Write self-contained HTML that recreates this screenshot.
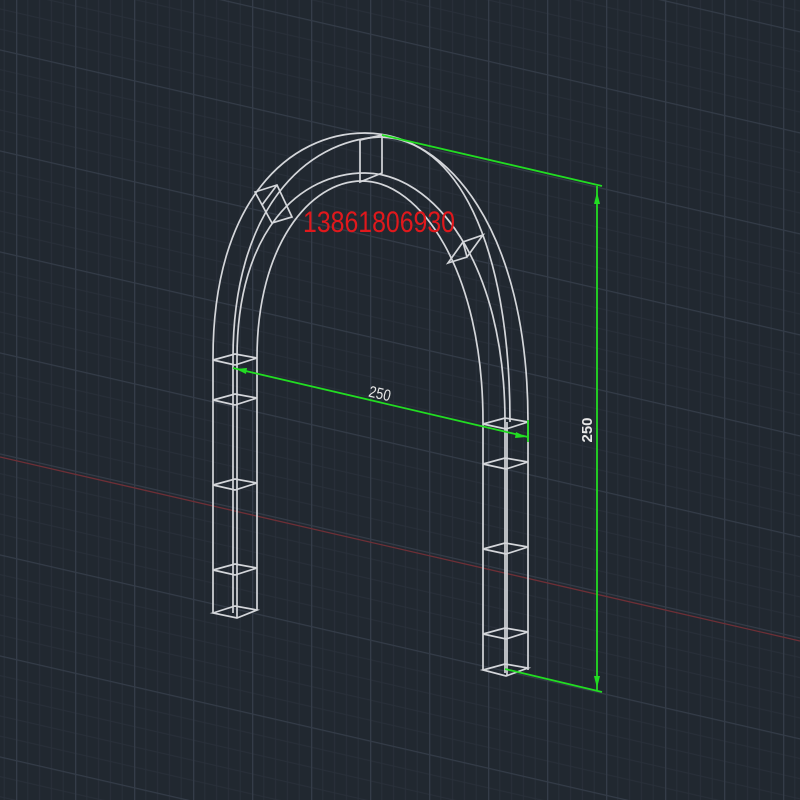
<!DOCTYPE html>
<html><head><meta charset="utf-8"><style>
html,body{margin:0;padding:0;background:#212830;}
svg{display:block}
</style></head><body>
<svg width="800" height="800" viewBox="0 0 800 800" xmlns="http://www.w3.org/2000/svg">
<defs>
<pattern id="g" patternUnits="userSpaceOnUse" width="59" height="101" patternTransform="translate(16,53) skewY(12.95)">
<g stroke="#29303a" stroke-width="1">
<line x1="11.8" y1="0" x2="11.8" y2="101"/><line x1="23.6" y1="0" x2="23.6" y2="101"/><line x1="35.4" y1="0" x2="35.4" y2="101"/><line x1="47.2" y1="0" x2="47.2" y2="101"/>
<line x1="0" y1="20.2" x2="59" y2="20.2"/><line x1="0" y1="40.4" x2="59" y2="40.4"/><line x1="0" y1="60.6" x2="59" y2="60.6"/><line x1="0" y1="80.8" x2="59" y2="80.8"/>
</g>
<g stroke="#343c48" stroke-width="1.6">
<line x1="0.5" y1="0" x2="0.5" y2="101"/><line x1="0" y1="0.5" x2="59" y2="0.5"/>
</g>
</pattern>
</defs>
<rect width="800" height="800" fill="#212830"/>
<rect width="800" height="800" fill="url(#g)"/>
<line x1="0" y1="457" x2="800" y2="641" stroke="#6e2f36" stroke-width="1.3"/>

<g fill="none" stroke="#d4d6da" stroke-width="1.7">
<path d="M213,358 C213,200 290,133 365,133 C448,133 528,230 528,422"/>
<path d="M233,358 C233,210 305,140 380,137 C455,138 510,240 510,422"/>
<path d="M237,358 C237,230 300,173 365,173 C432,173 505,260 505,422"/>
<path d="M257,358 C257,245 310,181 362,181 C420,181 483,270 483,422"/>
<path d="M255,192 L277,185 L292,217 L272,223 Z M255,192 L272,223 M277,185 L262,205"/>
<path d="M360,140 L382,135 L382,173 L360,182 Z M360,140 L360,182"/>
<path d="M448,263 L467,257 L483,235 L463,242 Z M463,242 L467,257"/>
<path d="M213,358 V613 M233,358 V613 M237,358 V618 M257,358 V610"/>
<path d="M213,360 L235,354 L257,358 L235,365 Z"/>
<path d="M213,400 L235,394 L257,398 L235,405 Z"/>
<path d="M213,485 L235,479 L257,483 L235,490 Z"/>
<path d="M213,570 L235,564 L257,568 L235,575 Z"/>
<path d="M213,613 L235,606 L257,610 L237,618 Z"/>
<path d="M483,422 V670 M505,422 V673 M507,422 V676 M528,422 V670"/>
<path d="M483,424 L505,418 L528,422 L506,429 Z"/>
<path d="M483,464 L505,458 L528,462 L506,469 Z"/>
<path d="M483,549 L505,543 L528,547 L506,554 Z"/>
<path d="M483,634 L505,628 L528,632 L506,639 Z"/>
<path d="M483,670 L505,664 L528,668 L506,676 Z"/>
</g>

<g stroke="#22dd22" stroke-width="1.8" fill="none">
<line x1="382" y1="135" x2="602" y2="186"/>
<line x1="597" y1="186" x2="597" y2="690"/>
<line x1="505" y1="669" x2="602" y2="692"/>
<line x1="233" y1="368" x2="528" y2="437"/>
<line x1="528" y1="420" x2="528" y2="442"/>
</g>
<g fill="#22dd22">
<path d="M597,192 L594,204 L600,204 Z"/>
<path d="M597,688 L594,676 L600,676 Z"/>
<path d="M236,369 L247,368 L246,374 Z"/>
<path d="M526,437 L515,438 L516,432 Z"/>
</g>
<g transform="translate(380 393) rotate(13)">
<text x="0" y="6" fill="#e6e6e6" font-family="Liberation Sans, sans-serif" font-size="16" text-anchor="middle" textLength="22" lengthAdjust="spacingAndGlyphs">250</text>
</g>
<text x="598" y="436" fill="#e6e6e6" font-family="Liberation Sans, sans-serif" font-size="15" font-weight="bold" text-anchor="middle" transform="rotate(-90 592 436)">250</text>
<text x="303" y="232" fill="#e0181c" font-family="Liberation Sans, sans-serif" font-size="30" textLength="152" lengthAdjust="spacingAndGlyphs">13861806930</text>
</svg>
</body></html>
